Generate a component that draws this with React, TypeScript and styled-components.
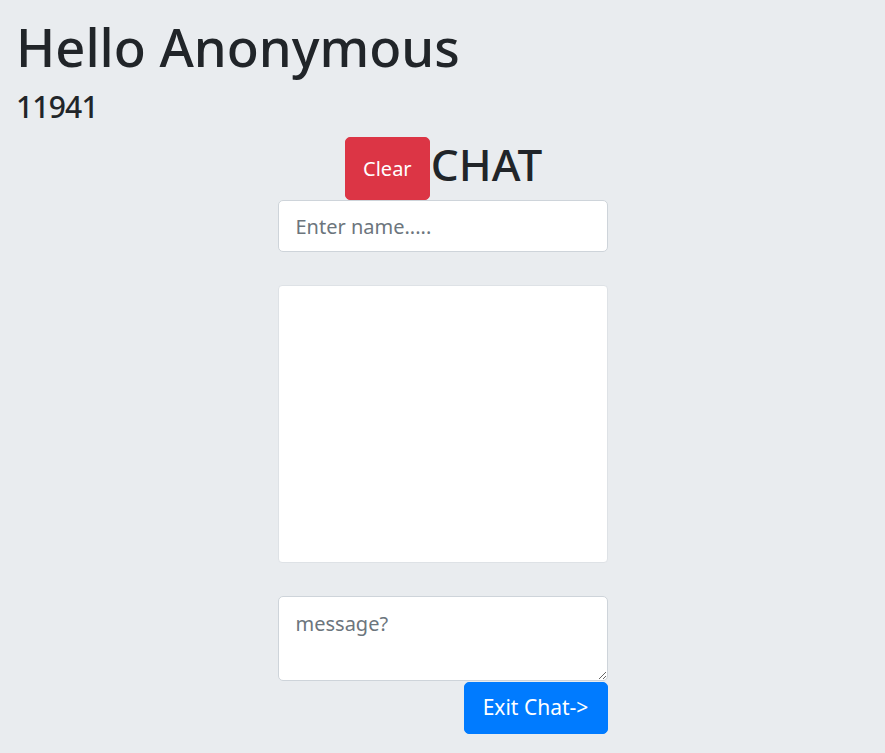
import React from "react";
import styled, { createGlobalStyle } from "styled-components";

const GlobalStyle = createGlobalStyle`
  html, body {
    margin: 0;
    padding: 0;
    background: #e9ecef;
  }
  body {
    font-family: "Noto Sans", "Open Sans", sans-serif;
    color: #212529;
  }
`;

const Page = styled.div`
  min-height: 753px;
  background: #e9ecef;
  padding: 15px 16px 0;
  box-sizing: border-box;
`;

const Greeting = styled.h1`
  margin: 0;
  font-size: 52.5px;
  font-weight: 500;
  line-height: 1.2;
`;

const Counter = styled.h3`
  margin: 11px 0 0;
  font-size: 30px;
  font-weight: 500;
  line-height: 1.2;
  letter-spacing: -0.8px;
`;

const ChatColumn = styled.div`
  width: 330px;
  margin: 12px auto 0;
  display: flex;
  flex-direction: column;
`;

const TitleRow = styled.div`
  display: flex;
  justify-content: center;
  align-items: flex-end;
  padding-left: 2px;
`;

const Title = styled.h2`
  margin: 0 0 9px 1px;
  font-size: 44px;
  font-weight: 500;
  line-height: 1.2;
`;

const Button = styled.button<{ $variant: "danger" | "primary" }>`
  font-family: inherit;
  font-size: 20px;
  line-height: 1.5;
  padding: 8px 16px;
  border: 1px solid ${p => (p.$variant === "danger" ? "#dc3545" : "#007bff")};
  background: ${p => (p.$variant === "danger" ? "#dc3545" : "#007bff")};
  color: #fff;
  border-radius: 5px;
  cursor: pointer;
`;

const ClearButton = styled(Button)`
  height: 63px;
  width: 85px;
  padding: 0;
`;

const NameInput = styled.input`
  font-family: inherit;
  font-size: 20px;
  height: 52px;
  padding: 0 17px;
  border: 1px solid #ced4da;
  border-radius: 5px;
  background: #fff;
  box-sizing: border-box;
  color: #495057;
  &::placeholder {
    color: #6c757d;
  }
`;

const Messages = styled.div`
  margin-top: 33px;
  height: 278px;
  background: #fff;
  border: 1px solid #dee2e6;
  border-radius: 4px;
  box-sizing: border-box;
`;

const MessageInput = styled.textarea`
  margin-top: 33px;
  font-family: inherit;
  font-size: 20px;
  height: 85px;
  padding: 13px 17px;
  border: 1px solid #ced4da;
  border-radius: 5px;
  background: #fff;
  box-sizing: border-box;
  display: block;
  resize: vertical;
  &::placeholder {
    color: #6c757d;
  }
`;

const Footer = styled.div`
  display: flex;
  justify-content: flex-end;
  margin-top: 1px;
`;

const ExitButton = styled(Button)`
  height: 52px;
  width: 144px;
  padding: 0;
  font-size: 21px;
`;

export default function App() {
  return (
    <Page>
      <GlobalStyle />
      <Greeting>Hello Anonymous</Greeting>
      <Counter>11941</Counter>
      <ChatColumn>
        <TitleRow>
          <ClearButton $variant="danger">Clear</ClearButton>
          <Title>CHAT</Title>
        </TitleRow>
        <NameInput placeholder="Enter name....." />
        <Messages />
        <MessageInput placeholder="message?" />
        <Footer>
          <ExitButton $variant="primary">Exit Chat-&gt;</ExitButton>
        </Footer>
      </ChatColumn>
    </Page>
  );
}
